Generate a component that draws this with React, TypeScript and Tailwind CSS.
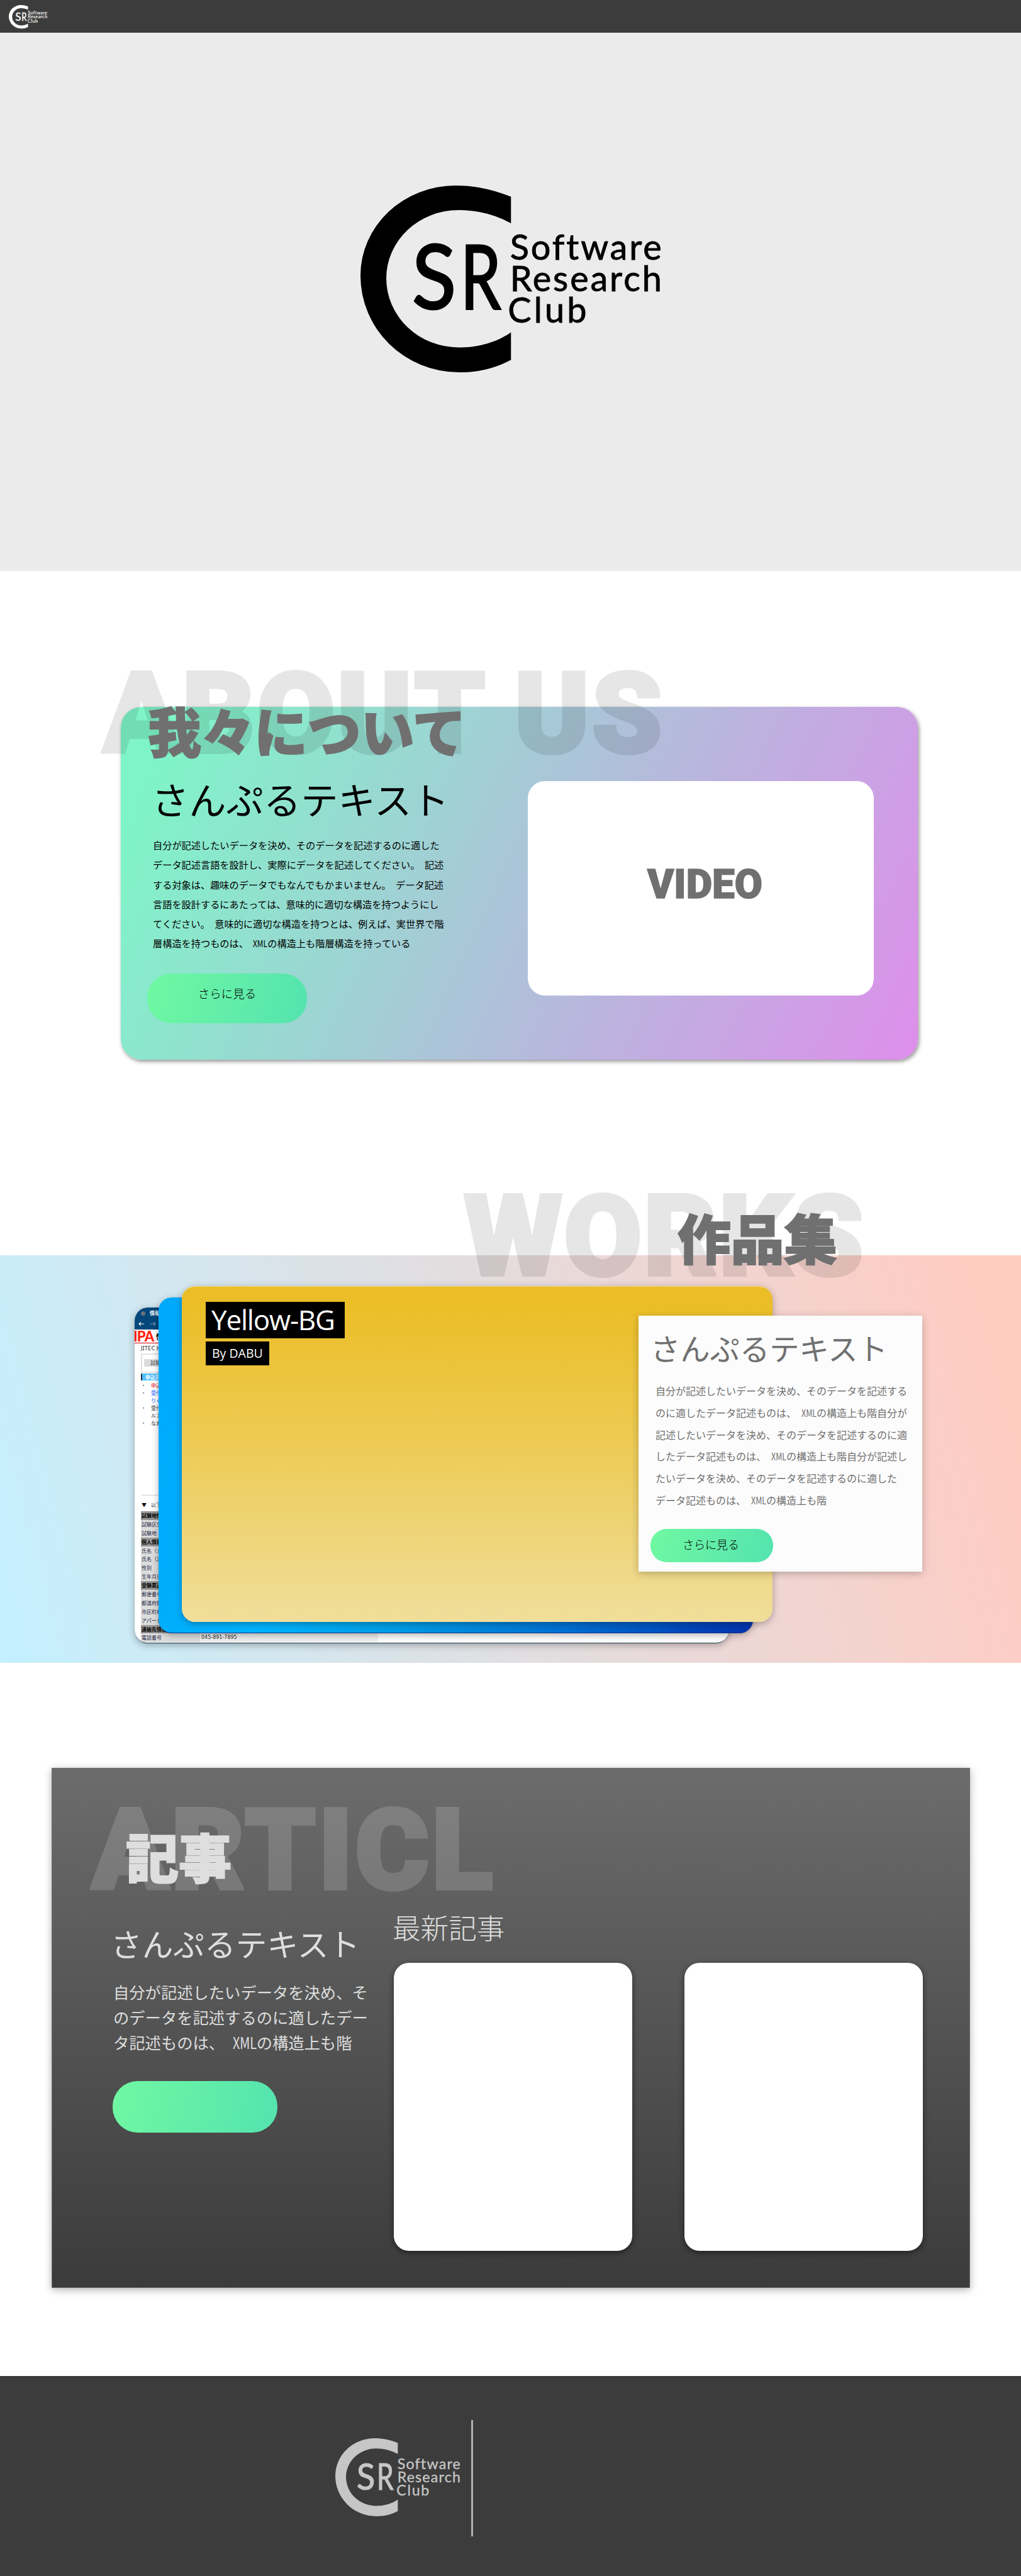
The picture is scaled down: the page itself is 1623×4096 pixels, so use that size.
import type { ReactNode } from "react";

const JP = "font-['Noto_Sans_CJK_JP',sans-serif]";

function Logo({ className }: { className: string }) {
  return (
    <svg viewBox="0 0 565 351" preserveAspectRatio="none" className={`overflow-visible [font-variant-ligatures:none] ${className}`} fill="currentColor">
      <path d="M282.8 21C246 6 212 0 178.7 0A178.700 169.300 0 0 0 0 169.300A184.800 181.700 0 0 0 184.800 351C222 351 252 344 282.8 327.7V276C255 295 222 304.3 184.800 304.3A136.300 130 0 0 1 48.5 174.300A136.300 128.300 0 0 1 184.800 46C220 46 253 55 282.8 71Z" />
      <g fontFamily="Lato, sans-serif" stroke="currentColor">
        <text x="97" y="231.5" fontSize="167" strokeWidth="3.5" textLength="83" lengthAdjust="spacingAndGlyphs">S</text>
        <text x="188" y="231.5" fontSize="167" strokeWidth="3.5" textLength="76" lengthAdjust="spacingAndGlyphs">R</text>
        <g fontSize="66" strokeWidth="1">
          <text x="281" y="139.3" textLength="285" lengthAdjust="spacing">Software</text>
          <text x="281" y="198" textLength="285" lengthAdjust="spacing">Research</text>
          <text x="277" y="258" textLength="148" lengthAdjust="spacing">Club</text>
        </g>
      </g>
    </svg>
  );
}

function Narrow({ children }: { children: ReactNode }) {
  return (
    <span className="inline-block w-[1.5em]">
      <span className="inline-block origin-left scale-x-[0.78]">{children}</span>
    </span>
  );
}

function Lines({ className, lines }: { className: string; lines: ReactNode[] }) {
  return (
    <div className={`whitespace-nowrap [word-spacing:0.276em] ${className}`}>
      {lines.map((line, i) => (
        <p key={i}>{line}</p>
      ))}
    </div>
  );
}

const xml = <Narrow>XML</Narrow>;

const examRows: [string, boolean][] = [
  ["試験地情報", true],
  ["試験区分", false],
  ["試験地", false],
  ["個人情報", true],
  ["氏名（カナ）", false],
  ["氏名（漢字）", false],
  ["性別", false],
  ["生年月日", false],
  ["受験票送付先", true],
  ["郵便番号", false],
  ["都道府県", false],
  ["市区町村", false],
  ["アパート", false],
  ["連絡先情報", true],
  ["電話番号", false],
];

function ExamCard() {
  return (
    <div className="absolute left-[214px] top-[83px] h-[534px] w-[945px] overflow-hidden rounded-[21px] border-b border-[#1d3c50] bg-white text-[8px] leading-[12px] text-[#333] shadow-[0_3px_12px_rgba(0,0,0,0.3)]">
      <div className="h-[35px] bg-[#04477a] text-white">
        <div className="flex h-[18px] items-center gap-[7px] pl-[10px]">
          <span className="h-[7px] w-[7px] rounded-full bg-[#68727a]" />
          <b>情報処理</b>
        </div>
        <div className="flex h-[16px] items-center gap-[8px] pl-[6px]">
          <svg viewBox="0 0 10 8" className="h-[8px] w-[9px]" fill="none" stroke="white" strokeWidth="1.2"><path d="M10 4H1M4.5.8L1 4l3.500 3.200" /></svg>
          <svg viewBox="0 0 10 8" className="ml-[2px] h-[8px] w-[9px]" fill="none" stroke="#7c9cb7" strokeWidth="1.2"><path d="M0 4h9M5.500.8L9 4 5.500 7.200" /></svg>
          <span className="ml-[3px] h-[7px] w-[7px] rounded-full border border-white" />
        </div>
      </div>
      <div className="flex h-[22px] items-center border-b border-red-600">
        <span className="-ml-[2px] w-[33px] font-['Lato',sans-serif] text-[22px] font-black leading-[20px] tracking-[-0.800px] text-[#ff1e0a]">IPA</span>
        <b className="ml-[3px] text-[11px] text-black">情報</b>
      </div>
      <div className="pl-[10px] font-['Noto_Sans','Noto_Sans_CJK_JP',sans-serif] text-[9.500px] leading-[15px]">JITECトップ</div>
      <div className="ml-[10px] mt-[1px] h-[31px] border-2 border-r-0 border-[#e2e2e2] pl-[3px] pt-[7px]">
        <div className="h-[12px] w-[80px] bg-[#dcdcdc] pl-[10px] font-bold text-[#777]">試験申込</div>
      </div>
      <div className="ml-[10px] mt-[1px] h-[11px] border-l-2 border-[#234] bg-[#4fc0ff] pl-[5px] font-bold leading-[11px] text-white">申込完了</div>
      <div className="mt-[2px] whitespace-pre pl-[10px]">
        <p className="flex"><span className="w-[16px]">・</span><span className="text-red-600">申込</span></p>
        <p className="flex"><span className="w-[16px]">・</span><span className="text-blue-600">受付</span></p>
        <p className="flex"><span className="w-[16px]" /><span className="text-blue-600">りく</span></p>
        <p className="flex"><span className="w-[16px]">・</span>受付</p>
        <p className="flex"><span className="w-[16px]" />ルア</p>
        <p className="flex"><span className="w-[16px]">・</span>なお</p>
      </div>
      <div className="ml-[11px] mt-[108px] h-[10px] border-t border-[#d0d0d0]" />
      <div className="flex h-[16px] pl-[11px] text-[8px]"><span className="w-[15px] text-black">▼</span>以下</div>
      <div className="ml-[10px]">
        {examRows.map(([label, head]) => (
          <div key={label} className="flex h-[13.900px] items-center leading-[13px]">
            <div className={head ? "h-full w-[94px] bg-[#969696] pl-px font-bold text-black" : "h-full w-[94px] bg-[#dcdcdc] pl-px text-[#224]"}>{label}</div>
            <div className="h-full w-[283px] bg-[#efefef] pl-[2px] font-['DejaVu_Sans',sans-serif] text-[8px]">{label === "電話番号" ? "045-891-7895" : ""}</div>
          </div>
        ))}
      </div>
    </div>
  );
}

export default function App() {
  return (
    <div className={`h-[4096px] w-[1623px] overflow-hidden bg-white text-black ${JP}`}>
      <header className="h-[52px] bg-[#3c3c3c] pl-[13.500px] pt-[7.500px] text-white">
        <Logo className="h-[37.500px] w-[61px]" />
      </header>

      <section className="h-[856px] bg-[#ebebeb] pl-[572.500px] pt-[243px]">
        <Logo className="h-[297px] w-[478px]" />
      </section>

      <section className="h-[1088px] pl-[192px] pt-[216px]">
        <div className="relative flex h-[561px] w-[1267px] rounded-[33px] bg-[linear-gradient(115deg,#7ff4c8_6%,#de8eeb_100%)] shadow-[2px_3px_6px_rgba(0,0,0,0.42)]">
          <div className="absolute left-[-28px] top-[-82px] whitespace-nowrap font-['Roboto',sans-serif] text-[179px] font-black leading-[187px] tracking-[3.600px] text-black opacity-[0.095] [-webkit-text-stroke:6px_#000]">ABOUT US</div>
          <div className="relative w-[647px] shrink-0">
            <h2 className="-mt-[6px] ml-[43px] text-[84.700px] font-black leading-[85px] text-[#707070] [-webkit-text-stroke:2px_#707070]">我々について</h2>
            <h3 className="ml-[49px] mt-[36px] text-[59.300px] font-normal leading-[60px]">さんぷるテキスト</h3>
            <Lines
              className="ml-[51px] mt-[29px] text-[15.200px] font-normal leading-[31.300px]"
              lines={[
                "自分が記述したいデータを決め、そのデータを記述するのに適した",
                "データ記述言語を設計し、実際にデータを記述してください。 記述",
                "する対象は、趣味のデータでもなんでもかまいません。 データ記述",
                "言語を設計するにあたっては、意味的に適切な構造を持つようにし",
                "てください。 意味的に適切な構造を持つとは、例えば、実世界で階",
                <>層構造を持つものは、 {xml}の構造上も階層構造を持っている</>,
              ]}
            />
            <button className="ml-[42px] mt-[32px] block h-[79px] w-[254px] rounded-[38px] bg-[linear-gradient(105deg,#70f8a2,#54e3af)] pb-[14px] text-[18.500px] font-light">さらに見る</button>
          </div>
          <div className="mt-[118px] flex h-[341px] w-[550px] items-center justify-center rounded-[27px] bg-white pb-[12px] pl-[13px] font-['Roboto',sans-serif] text-[64px] font-black leading-none text-[#707070] [-webkit-text-stroke:1.500px_#707070]">VIDEO</div>
        </div>
      </section>

      <section className="relative h-[648px] bg-[linear-gradient(75deg,#c4f0ff,#ffccc2_95%)]">
        <div className="absolute left-[738px] top-[-123px] whitespace-nowrap font-['Roboto',sans-serif] text-[179px] font-black leading-[187px] tracking-[3px] text-black opacity-[0.095] [-webkit-text-stroke:6px_#000]">WORKS</div>
        <h2 className="absolute left-[1077px] top-[-72px] whitespace-nowrap text-[84.700px] font-black leading-[85px] text-[#707070] [-webkit-text-stroke:2px_#707070]">作品集</h2>
        <ExamCard />
        <div className="absolute left-[252px] top-[67px] h-[534px] w-[945px] rounded-[21px] border-b border-[#023080] bg-[linear-gradient(102deg,#00a8fb,#00b4ff_25%,#009fe6_45%,#006fd2_72%,#0232ae_100%)] shadow-[0_3px_12px_rgba(0,0,0,0.3)]" />
        <div className="absolute left-[289px] top-[49px] flex h-[534px] w-[939px] flex-col items-start rounded-[21px] border-t border-[#f2d980] bg-[linear-gradient(180deg,#ebbe27_5%,#edca52_45%,#f0de9b)] pl-[38px] pt-[24px] font-['Open_Sans',sans-serif] text-white shadow-[0_3px_12px_rgba(0,0,0,0.3)]">
          <div className="flex h-[58px] w-[221px] items-center whitespace-nowrap bg-black pb-[2px] pl-[9px] text-[44px] leading-none tracking-[-1.200px]">Yellow-BG</div>
          <div className="mt-[5px] flex h-[38px] w-[101px] items-center whitespace-nowrap bg-black pb-px pl-[10px] text-[19.500px] leading-none">By DABU</div>
        </div>
        <div className="absolute left-[1015px] top-[96px] h-[407px] w-[451px] bg-[#fcfcfc] pt-[25px] text-[#707070] shadow-[0_3px_12px_rgba(0,0,0,0.24)]">
          <h3 className="ml-[19px] mt-[2px] text-[47.300px] font-normal leading-[48px]">さんぷるテキスト</h3>
          <Lines
            className="ml-[27px] mt-[27px] text-[16px] leading-[34.800px]"
            lines={[
              "自分が記述したいデータを決め、そのデータを記述する",
              <>のに適したデータ記述ものは、 {xml}の構造上も階自分が</>,
              "記述したいデータを決め、そのデータを記述するのに適",
              <>したデータ記述ものは、 {xml}の構造上も階自分が記述し</>,
              "たいデータを決め、そのデータを記述するのに適した",
              <>データ記述ものは、 {xml}の構造上も階</>,
            ]}
          />
          <button className="ml-[18.500px] mt-[28px] block h-[53px] w-[195px] rounded-[26px] bg-[linear-gradient(105deg,#70f8a2,#54e3af)] pb-[4px] pr-[2px] text-[18px] font-light text-black">さらに見る</button>
        </div>
      </section>

      <section className="h-[1134px] pl-[82px] pt-[167px]">
        <div className="relative flex h-[827px] w-[1460px] border border-[#707070] bg-[linear-gradient(180deg,#6c6c6c,#3b3b3b)] text-[#dedede] shadow-[0_3px_12px_rgba(0,0,0,0.3)]">
          <div className="absolute left-[63px] top-[37px] whitespace-nowrap font-['Roboto',sans-serif] text-[179px] font-black leading-[187px] tracking-[4.300px] text-white opacity-15 [-webkit-text-stroke:6px_#fff]">ARTICL</div>
          <div className="relative w-[543px] shrink-0 pt-[96px]">
            <h2 className="ml-[117px] text-[84px] font-black leading-[85px] [-webkit-text-stroke:2px_#dedede]">記事</h2>
            <h3 className="ml-[93px] mt-[71px] text-[49.700px] font-normal leading-[50px]">さんぷるテキスト</h3>
            <Lines
              className="ml-[97px] mt-[34px] text-[25.300px] leading-[39.800px]"
              lines={[
                "自分が記述したいデータを決め、そ",
                "のデータを記述するのに適したデー",
                <>タ記述ものは、 {xml}の構造上も階</>,
              ]}
            />
            <div className="ml-[96px] mt-[42px] h-[82px] w-[262px] rounded-[40px] bg-[linear-gradient(105deg,#70f8a2,#54e3af)]" />
          </div>
          <div className="relative pt-[229px]">
            <h3 className="-ml-[2px] text-[44.600px] font-light leading-[46px]">最新記事</h3>
            <div className="mt-[34px] flex gap-[83px]">
              <div className="h-[458px] w-[379px] rounded-[24px] bg-white shadow-[0_3px_10px_rgba(0,0,0,0.5)]" />
              <div className="h-[458px] w-[379px] rounded-[24px] bg-white shadow-[0_3px_10px_rgba(0,0,0,0.5)]" />
            </div>
          </div>
        </div>
      </section>

      <footer className="flex h-[318px] bg-[#3c3c3c] pl-[532.500px] pt-[70px] text-[#c6c6c6]">
        <Logo className="mt-[29px] h-[124px] w-[198.500px]" />
        <div className="ml-[18px] h-[185px] w-[2.500px] bg-[#b0b0b0]" />
      </footer>
    </div>
  );
}
